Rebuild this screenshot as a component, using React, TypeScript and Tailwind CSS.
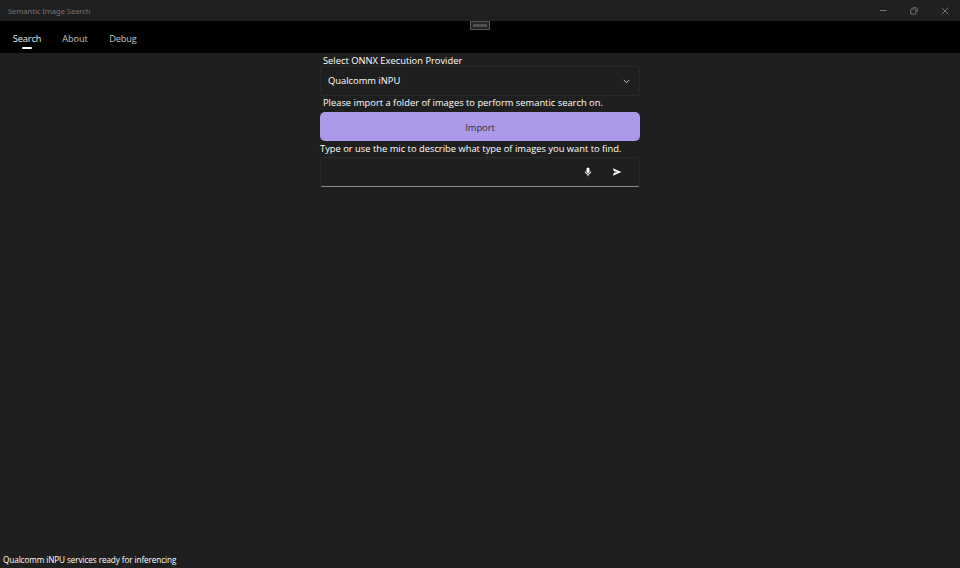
import React from 'react';

const tabs = [
  { label: 'Search', width: 'w-[28px]', active: true },
  { label: 'About', width: 'w-[26px]', active: false },
  { label: 'Debug', width: 'w-[28px]', active: false },
];

function TitleBar() {
  return (
    <header className="flex h-[21px] shrink-0 items-center justify-between bg-[#202020] pl-2 text-[#737373]">
      <span className="pt-px text-[7.6px] leading-[20px] tracking-[-0.06px] font-['Noto_Sans',sans-serif]">Semantic Image Search</span>
      <div className="flex h-full items-center">
        <button aria-label="Minimize" className="flex h-full w-[31px] items-center justify-center">
          <svg width="8" height="8" viewBox="0 0 8 8" stroke="currentColor" fill="none"><path d="M.8 3.5h6.6" /></svg>
        </button>
        <button aria-label="Restore" className="flex h-full w-[31px] items-center justify-center">
          <svg width="8" height="8" viewBox="0 0 8 8" stroke="currentColor" strokeWidth="1" fill="none">
            <rect x="0.7" y="2" width="5.2" height="5.2" rx="1.2" />
            <path d="M2.2 1.5Q2.5.6 3.6.6H5.5Q7.3.6 7.3 2.4V4.2Q7.3 5.3 6.5 5.7" />
          </svg>
        </button>
        <button aria-label="Close" className="flex h-full w-[31px] items-center justify-center">
          <svg width="8" height="8" viewBox="0 0 8 8" stroke="currentColor" strokeWidth="1" fill="none"><path d="M.6.6l6.8 6.8M7.4.6L.6 7.4" /></svg>
        </button>
      </div>
    </header>
  );
}

function NavBar() {
  return (
    <nav className="relative flex h-8 shrink-0 gap-[21px] bg-black pl-[13px] text-[9.2px] tracking-[-0.12px]">
      {tabs.map((tab) => (
        <div key={tab.label} className={`${tab.width} flex flex-col items-center whitespace-nowrap pt-[11px] leading-[13px] ${tab.active ? 'text-[#ededed]' : 'text-[#c4c4c4]'}`}>
          <span>{tab.label}</span>
          {tab.active && <span className="mt-[2px] h-[2px] w-[10px] rounded-full bg-white" />}
        </div>
      ))}
      <div className="absolute left-[470px] top-0 flex h-[9px] w-5 items-center justify-center border border-[#555] bg-[#252525]">
        <span className="h-[3px] w-[14px] bg-[#515151]" />
      </div>
    </nav>
  );
}

export default function App() {
  return (
    <div className="flex h-[568px] w-[960px] flex-col overflow-hidden bg-[#1f1f1f] font-['Open_Sans',sans-serif] text-white">
      <TitleBar />
      <NavBar />
      <main className="mx-auto flex w-80 flex-1 flex-col text-[9.35px]">
        <label className="h-[13px] pl-[3px] leading-[16px]">Select ONNX Execution Provider</label>
        <button className="flex h-[30px] items-center justify-between rounded-[3px] border border-[#292929] px-[7px] text-left leading-[14px]">
          <span>Qualcomm iNPU</span>
          <svg className="mr-[2px]" width="7" height="5" viewBox="0 0 7 5" fill="none" stroke="#c5c5c5"><path d="M.8 1l2.7 2.7L6.2 1" /></svg>
        </button>
        <p className="h-4 pl-[3px] leading-[14px]">Please import a folder of images to perform semantic search on.</p>
        <button className="h-[29.4px] rounded-[5px] bg-[#ac99ea] pt-[2px] leading-[14px] text-[#303030]">Import</button>
        <p className="h-[15.6px] leading-[15px]">Type or use the mic to describe what type of images you want to find.</p>
        <div className="flex h-[30px] items-center justify-end rounded-[3px] border border-[#292929] border-b-[#8a8a8a]">
          <button aria-label="Record" className="flex w-[29px] justify-center">
            <svg width="8" height="10" viewBox="0 0 8 10" fill="none">
              <rect x="2.5" y=".6" width="3" height="5.5" rx="1.5" fill="white" />
              <path d="M1.3 4.5a2.7 2.7 0 0 0 5.4 0M4 7.1v2.1" stroke="white" strokeWidth=".9" />
            </svg>
          </button>
          <button aria-label="Send" className="mr-[8px] flex w-[29px] justify-center">
            <svg width="10" height="8" viewBox="0 0 10 8" fill="white"><path d="M.8.2L9.4 4 .8 7.8 2 4.8 6 4 2 3.2z" /></svg>
          </button>
        </div>
      </main>
      <footer className="h-[17px] shrink-0 pl-[3px] text-[8.2px] leading-[17px] tracking-[-0.1px]">Qualcomm iNPU services ready for inferencing</footer>
    </div>
  );
}
